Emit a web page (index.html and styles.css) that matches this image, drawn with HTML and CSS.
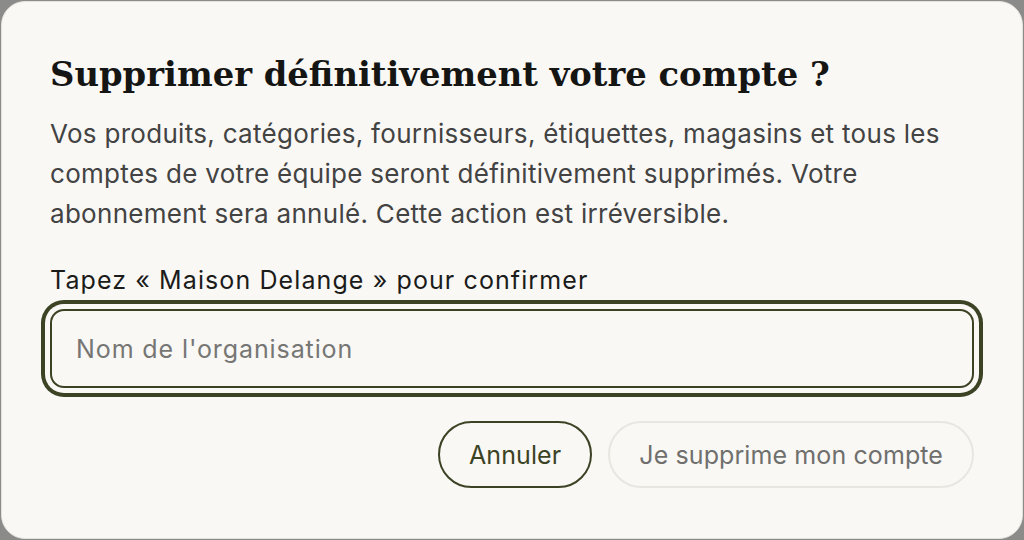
FILE: index.html
```html
<!DOCTYPE html>
<html lang="fr">
<head>
<meta charset="utf-8">
<title>Supprimer le compte</title>
<link rel="stylesheet" href="styles.css">
</head>
<body>
<div class="dialog">
  <h1 class="title">Supprimer définitivement votre compte ?</h1>
  <p class="desc">Vos produits, catégories, fournisseurs, étiquettes, magasins et tous les comptes de votre équipe seront définitivement supprimés. Votre abonnement sera annulé. Cette action est irréversible.</p>
  <label class="label" for="org">Tapez « Maison Delange » pour confirmer</label>
  <input class="field" id="org" type="text" placeholder="Nom de l'organisation">
  <div class="actions">
    <button class="btn btn-cancel" type="button">Annuler</button>
    <button class="btn btn-danger" type="button" disabled>Je supprime mon compte</button>
  </div>
</div>
</body>
</html>
```

FILE: styles.css
```css
html, body {
  margin: 0;
  padding: 0;
}
body {
  width: 1024px;
  height: 540px;
  background: #8b8b8a;
  padding: 1px;
  box-sizing: border-box;
  font-family: Inter, "Noto Sans", sans-serif;
}
.dialog {
  box-sizing: border-box;
  height: 538px;
  background: #f9f8f5;
  border: 1px solid #e4e2dc;
  border-radius: 24px;
  padding: 50px 48px 48px;
  display: flex;
  flex-direction: column;
}
.title {
  margin: 0;
  font-family: "DejaVu Serif", "Liberation Serif", serif;
  font-weight: 700;
  font-size: 33.8px;
  line-height: 44px;
  color: #151514;
}
.desc {
  margin: 18px 0 0;
  font-size: 26px;
  letter-spacing: 0.3px;
  line-height: 40px;
  color: #434343;
}
.label {
  display: block;
  margin-top: 30px;
  font-size: 25px;
  letter-spacing: 1.1px;
  line-height: 32px;
  color: #1b1b1a;
}
.field {
  box-sizing: border-box;
  margin: 13px 0 0;
  width: 100%;
  height: 79px;
  padding: 0 24px;
  border: 2px solid #3c4324;
  border-radius: 14px;
  background: #f9f8f5;
  font-family: inherit;
  font-size: 25px;
  letter-spacing: 0.9px;
  color: #1b1b1a;
  outline: none;
  box-shadow: 0 0 0 5px #f9f8f5, 0 0 0 9px #3c4324;
}
.field::placeholder {
  color: #767674;
}
.actions {
  margin-top: 33px;
  display: flex;
  justify-content: flex-end;
  gap: 16px;
}
.btn {
  box-sizing: border-box;
  height: 67px;
  padding: 0 29px;
  border-radius: 34px;
  font-family: inherit;
  font-size: 25px;
  letter-spacing: 0.1px;
  background: transparent;
}
.btn-cancel {
  border: 2px solid #3c4324;
  color: #3c4324;
}
.btn-danger {
  border: 2px solid #e8e6e0;
  color: #6f6f6d;
}
```
